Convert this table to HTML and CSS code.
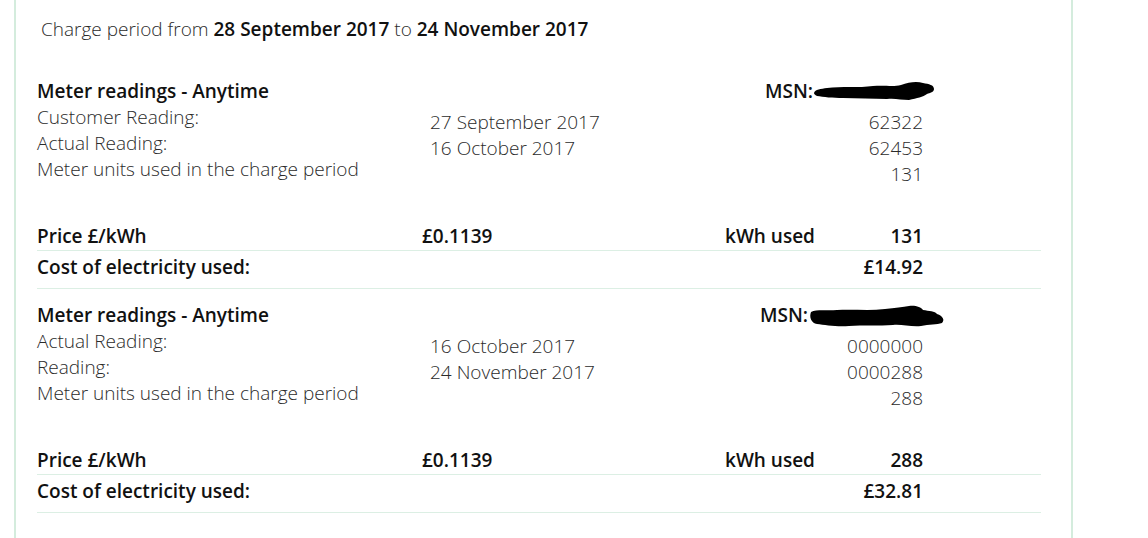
FILE: index.html
```html
<!DOCTYPE html>
<html lang="en">
<head>
<meta charset="utf-8">
<title>Charge period</title>
<link rel="stylesheet" href="styles.css">
</head>
<body>
<div class="card">
  <p class="period">Charge period from <b>28 September 2017</b> to <b>24 November 2017</b></p>

  <section class="meter">
    <div class="readings">
      <div class="col labels">
        <div class="line head">Meter readings - Anytime</div>
        <div class="line">Customer Reading:</div>
        <div class="line">Actual Reading:</div>
        <div class="line">Meter units used in the charge period</div>
      </div>
      <div class="col dates">
        <div class="line">27 September 2017</div>
        <div class="line">16 October 2017</div>
      </div>
      <div class="col values">
        <div class="line head msn">MSN:<svg class="blob b1" width="122" height="20" viewBox="0 0 122 20"><path d="M1 12 C2 8 8 8 14 7 C28 5 46 7 60 5 C72 4 80 6 88 4 C96 1 104 0 110 2 C116 3 121 4 121 8 C121 11 117 12 114 13 C110 16 104 17 96 19 C88 19 82 17 74 18 C60 18 44 17 30 17 C20 17 10 16 4 15 C2 14 1 13 1 12 Z" fill="#000"/></svg></div>
        <div class="nums">
          <div class="line">62322</div>
          <div class="line">62453</div>
          <div class="line">131</div>
        </div>
      </div>
    </div>
    <div class="row price">
      <span class="c1">Price £/kWh</span>
      <span class="c2">£0.1139</span>
      <span class="c3">kWh used</span>
      <span class="c4">131</span>
    </div>
    <div class="row cost">
      <span class="c1">Cost of electricity used:</span>
      <span class="c2"></span>
      <span class="c3"></span>
      <span class="c4">£14.92</span>
    </div>
  </section>

  <section class="meter">
    <div class="readings">
      <div class="col labels">
        <div class="line head">Meter readings - Anytime</div>
        <div class="line">Actual Reading:</div>
        <div class="line">Reading:</div>
        <div class="line">Meter units used in the charge period</div>
      </div>
      <div class="col dates">
        <div class="line">16 October 2017</div>
        <div class="line">24 November 2017</div>
      </div>
      <div class="col values">
        <div class="line head msn">MSN:<svg class="blob b2" width="136" height="24" viewBox="0 0 136 24"><path d="M2 7 C8 4 18 6 28 5 C44 4 60 6 76 4 C86 3 94 2 100 1 C106 0 112 2 114 5 C120 6 126 6 128 9 C134 11 136 15 133 18 C128 20 120 19 112 21 C102 22 92 19 84 20 C70 21 54 20 40 21 C28 22 16 20 8 19 C2 18 0 12 2 7 Z" fill="#000"/></svg></div>
        <div class="nums">
          <div class="line">0000000</div>
          <div class="line">0000288</div>
          <div class="line">288</div>
        </div>
      </div>
    </div>
    <div class="row price">
      <span class="c1">Price £/kWh</span>
      <span class="c2">£0.1139</span>
      <span class="c3">kWh used</span>
      <span class="c4">288</span>
    </div>
    <div class="row cost">
      <span class="c1">Cost of electricity used:</span>
      <span class="c2"></span>
      <span class="c3"></span>
      <span class="c4">£32.81</span>
    </div>
  </section>
</div>
</body>
</html>
```

FILE: styles.css
```css
html, body {
  margin: 0;
  padding: 0;
  background: #fff;
}

body {
  font-family: "Open Sans", "Noto Sans", sans-serif;
  color: #2b2b2b;
  overflow: hidden;
}

.card {
  margin-left: 14px;
  width: 1034px;
  min-height: 538px;
  border-left: 2px solid #d4ecdd;
  border-right: 2px solid #d4ecdd;
  padding-left: 21px;
  box-sizing: content-box;
}

.period {
  margin: 0;
  padding: 16px 0 0 4px;
  font-size: 19px;
  line-height: 26px;
  font-weight: 300;
  color: #2b2b2b;
}

.period b {
  font-weight: 600;
  color: #111;
}

.meter {
  width: 1004px;
}

.readings {
  display: flex;
  font-size: 19px;
  font-weight: 300;
  line-height: 26px;
}

.period + .meter {
  padding-top: 36px;
}

.meter + .meter {
  padding-top: 13px;
}

.line {
  height: 26px;
  white-space: nowrap;
}

.head {
  font-weight: 600;
  color: #111;
}

.labels {
  width: 393px;
}

.dates {
  width: 200px;
  padding-top: 31px;
}

.values {
  width: 293px;
  text-align: right;
}

.msn {
  display: flex;
  justify-content: flex-end;
  align-items: center;
}

.blob {
  flex: none;
  margin-right: -12px;
}

.blob.b2 {
  margin-right: -22px;
  margin-left: 1px;
  margin-top: 4px;
}

.nums {
  padding-top: 5px;
}

.row {
  display: grid;
  grid-template-columns: 385px 303px 120px 78px 1fr;
  font-size: 19px;
  line-height: 26px;
  font-weight: 600;
  color: #111;
  border-bottom: 1px solid #dcefe4;
}

.row .c4 {
  text-align: right;
}

.price {
  margin-top: 36px;
  padding-bottom: 1px;
}

.cost {
  padding-top: 3px;
  padding-bottom: 8px;
}
```
